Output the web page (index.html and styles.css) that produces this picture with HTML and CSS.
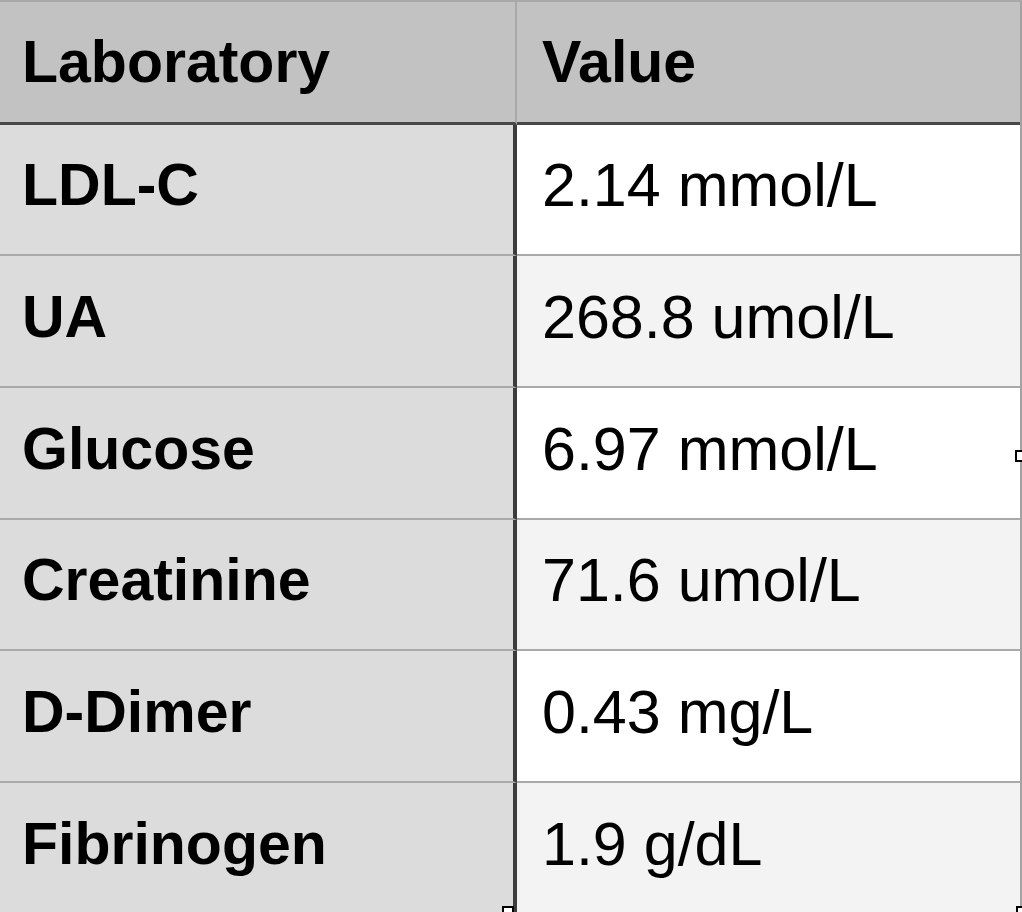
FILE: index.html
```html
<!DOCTYPE html>
<html lang="en">
<head>
<meta charset="utf-8">
<title>Laboratory values</title>
<link rel="stylesheet" href="styles.css">
</head>
<body>
<div class="sheet">
  <div class="grid">
    <div class="cell head head-left">Laboratory</div>
    <div class="cell head head-right">Value</div>

    <div class="cell lab">LDL-C</div>
    <div class="cell val">2.14 mmol/L</div>

    <div class="cell lab">UA</div>
    <div class="cell val alt">268.8 umol/L</div>

    <div class="cell lab">Glucose</div>
    <div class="cell val">6.97 mmol/L</div>

    <div class="cell lab">Creatinine</div>
    <div class="cell val alt">71.6 umol/L</div>

    <div class="cell lab">D-Dimer</div>
    <div class="cell val">0.43 mg/L</div>

    <div class="cell lab last">Fibrinogen</div>
    <div class="cell val alt last">1.9 g/dL</div>
  </div>
  <span class="handle handle-right"></span>
  <span class="handle handle-bottom"></span>
  <span class="handle handle-corner"></span>
</div>
</body>
</html>
```

FILE: styles.css
```css
html, body {
  margin: 0;
  padding: 0;
  background: #ffffff;
}

.sheet {
  position: relative;
  width: 1022px;
  height: 912px;
  overflow: hidden;
  font-family: "Liberation Sans", Arial, Helvetica, sans-serif;
  color: #000;
}

.grid {
  display: grid;
  grid-template-columns: 517px 1fr;
  grid-template-rows: 123px 131px 132px 132px 131px 132px 131px;
  border-top: 2px solid #a8a8a8;
  border-right: 2px solid #a2a2a2;
  box-sizing: border-box;
  width: 1022px;
}

.cell {
  box-sizing: border-box;
  display: flex;
  align-items: center;
  font-size: 61px;
  line-height: 69px;
  white-space: nowrap;
  padding-bottom: 8px;
}

.head {
  background: #c2c2c2;
  font-weight: bold;
  font-size: 59px;
  border-bottom: 3px solid #474747;
  padding-bottom: 0;
}

.head-left {
  padding-left: 22px;
  border-right: 2px solid #a9a9a9;
}

.head-right {
  padding-left: 25px;
}

.lab {
  background: #dcdcdc;
  font-weight: bold;
  font-size: 59px;
  padding-left: 22px;
  border-right: 4px solid #3c3c3c;
  border-bottom: 2px solid #a9a9a9;
}

.val {
  background: #ffffff;
  padding-left: 25px;
  border-bottom: 2px solid #a9a9a9;
}

.val.alt {
  background: #f3f3f3;
}

.last {
  border-bottom: none;
}

.handle {
  position: absolute;
  box-sizing: border-box;
  background: #ffffff;
  border: 2px solid #000;
}

.handle-right {
  left: 1015px;
  top: 450px;
  width: 11px;
  height: 12px;
}

.handle-bottom {
  left: 502px;
  top: 906px;
  width: 12px;
  height: 11px;
}

.handle-corner {
  left: 1016px;
  top: 906px;
  width: 11px;
  height: 11px;
}
```
